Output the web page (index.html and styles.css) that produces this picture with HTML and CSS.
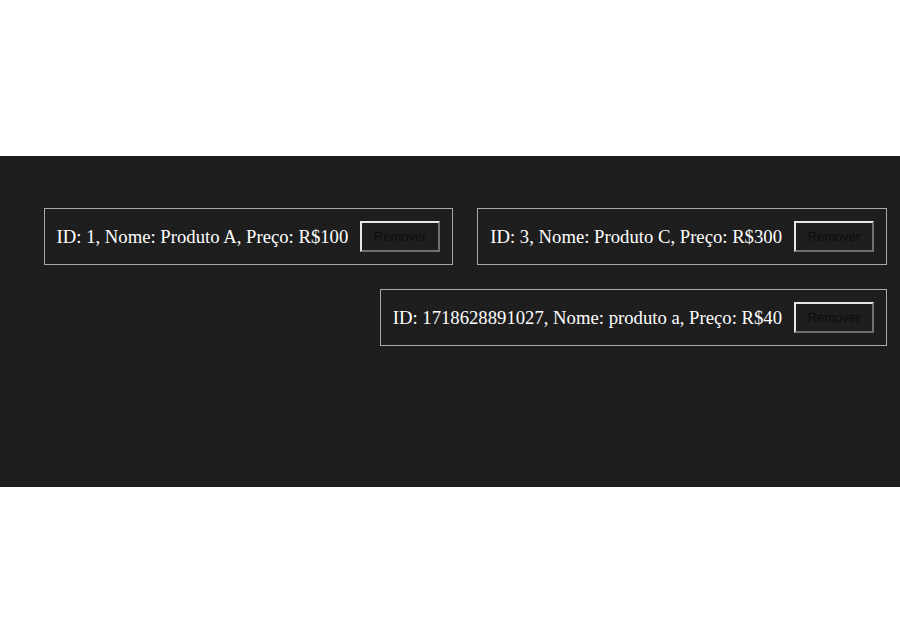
FILE: index.html
```html
<!DOCTYPE html>
<html lang="pt">
<head>
<meta charset="utf-8">
<title>Produtos</title>
<link rel="stylesheet" href="styles.css">
</head>
<body>
  <main class="band">
    <ul class="list">
      <li class="item"><span class="label">ID: 1, Nome: Produto A, Preço: R$100</span><button class="remove">Remover</button></li>
      <li class="item"><span class="label">ID: 3, Nome: Produto C, Preço: R$300</span><button class="remove">Remover</button></li>
      <li class="item"><span class="label">ID: 1718628891027, Nome: produto a, Preço: R$40</span><button class="remove">Remover</button></li>
    </ul>
  </main>
</body>
</html>
```
FILE: styles.css
```css
html, body {
  margin: 0;
  padding: 0;
  height: 100%;
  background: #ffffff;
}
body {
  display: flex;
  flex-direction: column;
  justify-content: center;
}
.band {
  height: 331px;
  box-sizing: border-box;
  background: #1e1e1e;
  padding: 52px 13px 0 13px;
}
.list {
  list-style: none;
  margin: 0;
  padding: 0;
  display: flex;
  flex-wrap: wrap;
  justify-content: flex-end;
  gap: 24px 24px;
}
.item {
  display: flex;
  align-items: center;
  gap: 12px;
  padding: 12px;
  border: 1px solid #a9a9a9;
  color: #ffffff;
  font-family: "Liberation Serif", "Times New Roman", serif;
  font-size: 18.7px;
}
.remove {
  width: 80px;
  height: 31px;
  box-sizing: border-box;
  background: #1e1e1e;
  color: #0c0c0c;
  border: 2px solid #767676;
  border-top-color: #e6e6e6;
  border-left-color: #e6e6e6;
  border-right-color: #707070;
  border-bottom-color: #707070;
  font-family: "Liberation Sans", Arial, sans-serif;
  font-size: 13px;
  padding: 0;
}
```
